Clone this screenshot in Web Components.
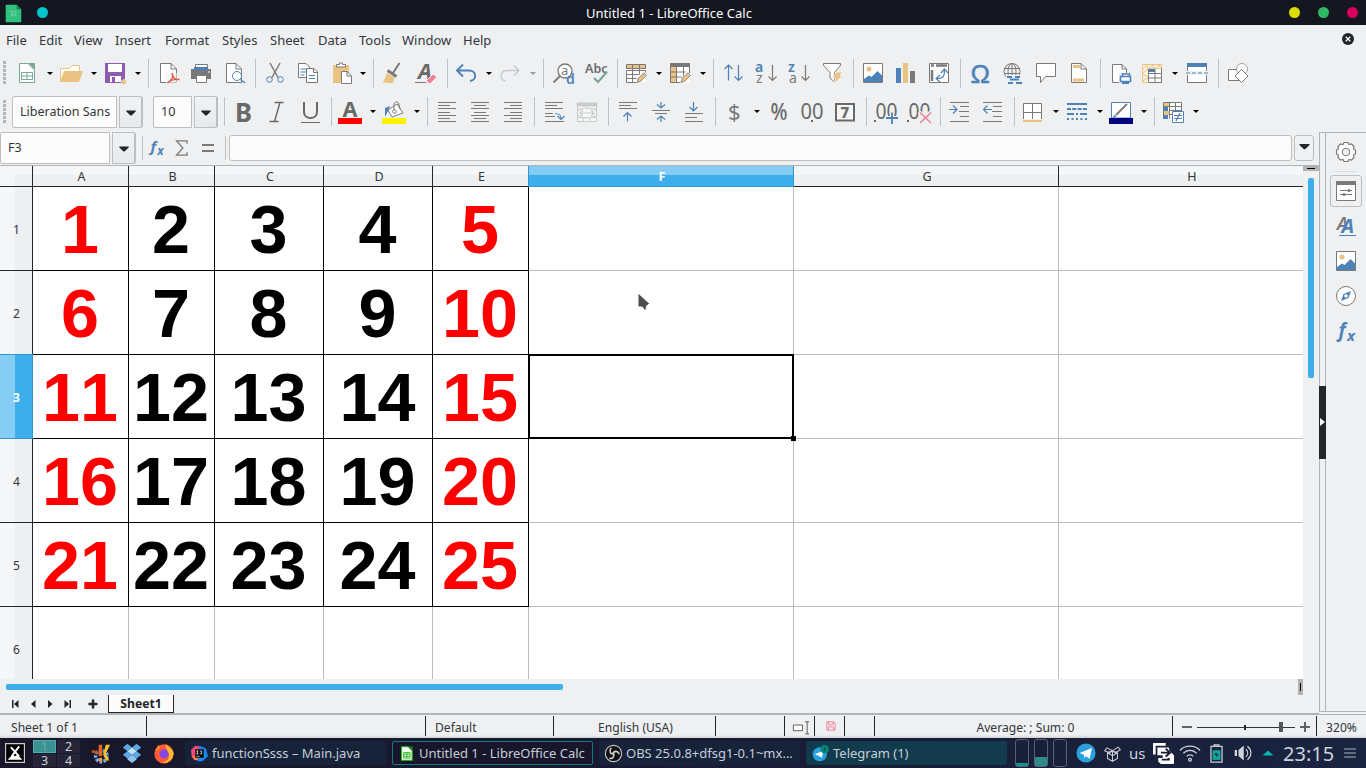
<!DOCTYPE html>
<html lang="en">
<head>
<meta charset="utf-8">
<title>Untitled 1 - LibreOffice Calc</title>
<style>
html,body{margin:0;height:100%;overflow:hidden}
body{font:13px "Noto Sans",sans-serif;color:#31363b}
</style>
</head>
<body>
<calc-desktop></calc-desktop>
<script>
const G='#797979',B='#4d82b8',O='#eac282',P='#ed8198';
const page=`<path d="M5 2.5H15.5L20.5 7.5V21.5H5Z" fill="#fff" stroke="${G}"/><path d="M15 2.5V8H20.5" fill="none" stroke="${G}"/>`;
const pencil=`<path d="M12 22l1.5-5 6-6.5 3.5 3.2-6 6.5z" fill="#eff0f1"/><path d="M13 21.5l1.2-4 5.6-5.7 2.6 2.6-5.6 5.8z" fill="${O}" stroke="${G}" stroke-width=".8"/>`;
const lines=(ys)=>ys.map(([x,y,w])=>`<path d="M${x} ${y}h${w}" stroke="${G}"/>`).join('');
const T=(x,y,s,t,c=G,e='')=>`<text x="${x}" y="${y}" font-size="${s}" fill="${c}" ${e}>${t}</text>`;
const picture=`<path d="M2.5 2.5h19v19h-19z" fill="#fff" stroke="${G}"/><circle cx="8" cy="8" r="2.5" fill="${O}"/><path d="M3 21v-3l5-3.5 2.500 1.500 6-6 4.500 4.500V21z" fill="${B}"/>`;
const ICONS={
new:`<path d="M4.500 2.500H13L19.500 9V21.500H4.500Z" fill="#fff" stroke="#76a797"/><path d="M13 2h7v7z" fill="#76a797"/><path d="M6.500 11.500h11v7h-11zM6.500 15h11M12 11.500v7" fill="#fff" stroke="#76a797"/>`,
open:`<path d="M1.500 20.500V7.500H10.500L13 4.500H20.500V11" fill="#fff" stroke="${O}"/><path d="M1 21L5 10H24L20 21Z" fill="${O}"/>`,
save:`<path d="M2 2h20v20H2z" fill="#8e5bb3"/><path d="M5 3h14v8H5zM7 15h11v6H7z" fill="#fff"/><path d="M9 16h3v5H9z" fill="#8e5bb3"/><circle cx="21" cy="21" r="2.500" fill="${O}" stroke="#eff0f1" stroke-width=".6"/>`,
pdf:`<path d="M3.500 2.500H14L19.500 8V21.500H3.500Z" fill="#fff" stroke="${G}"/><path d="M14 2.500V8h5.500" fill="none" stroke="${G}"/><path d="M9 12h14v11H9z" fill="#eff0f1" opacity=".6"/><path d="M15 12c1.500 3 0 7-4.500 10M15.500 13c0 4 3 6 7 5.500M10.500 22c3-3 7-4 12-3.500" fill="none" stroke="#de5a44" stroke-width="1.400"/>`,
print:`<path d="M6.500 8V3.500h12V8" fill="#fff" stroke="${G}"/><path d="M2 8h20v10H2z" fill="${G}"/><path d="M5 6h14v3H5z" fill="${B}"/><path d="M7.500 14.500h10v7h-10z" fill="#fff" stroke="${G}"/><path d="M19 11h2" stroke="#fff"/>`,
preview:`<path d="M3.500 2.500H13L18.500 8V21.500H3.500Z" fill="#fff" stroke="${G}"/><path d="M13 2.500V8h5.500" fill="none" stroke="${G}"/><circle cx="14" cy="15" r="4.500" fill="#fff" stroke="${B}"/><path d="M17.500 18.500L22 22" stroke="${B}" stroke-width="1.500"/>`,
cut:`<path d="M7 2l8 14.500M17 2L9 16.500" stroke="${G}" stroke-width="1.500"/><circle cx="6.500" cy="18.500" r="2.800" fill="none" stroke="${B}"/><circle cx="17.500" cy="18.500" r="2.800" fill="none" stroke="${B}"/>`,
copy:`<path d="M2.500 2.500H10L13.500 6V16.500H2.500Z" fill="#fff" stroke="${G}"/><path d="M4.500 8h7M4.500 11h7M4.500 14h4" stroke="${B}"/><path d="M10.500 7.500H18L21.500 11V21.500H10.500Z" fill="#fff" stroke="${G}"/><path d="M17.500 7.500v4h4" fill="none" stroke="${G}"/><path d="M13 14.500h6M13 17.500h6" stroke="${B}"/>`,
paste:`<path d="M4 4h16v18H4z" fill="${O}"/><path d="M7.500 6V3.500h3V2h3v1.500h3V6z" fill="#fff" stroke="${G}"/><path d="M12.500 10.500H18L22.500 15V22.500H12.500Z" fill="#fff" stroke="${G}"/><path d="M18 10.500V15h4.500" fill="none" stroke="${G}"/>`,
brush:`<path d="M18.500 2L12 12" stroke="${G}" stroke-width="2"/><path d="M6.500 9.500l9 6" stroke="${G}" stroke-width="3"/><path d="M6 12l7.500 4.500L12 22H6L5 20.500 4 22H2z" fill="${O}"/>`,
clear:T(4,18,22,'A','#696969','font-style="italic" font-weight="700"')+`<path d="M1 21.500h11" stroke="${G}"/><path d="M12 20l7-7 4 3-7 7z" fill="${P}" stroke="#eff0f1"/>`,
undo:`<path d="M9 3.500L3 9.500l6 6M3 9.500h12c8 0 8 10 1 10.500" fill="none" stroke="${B}" stroke-width="1.900"/>`,
redo:`<path d="M16 4.500l5 5-5 5M21 9.500H9C2 9.500 1 19 7.500 20" fill="none" stroke="#c5c7c9" stroke-width="1.300"/>`,
find:`<circle cx="14" cy="10" r="7" fill="#fff" stroke="${G}" stroke-width="1.300"/><path d="M9 15L2.500 21.500" stroke="${G}" stroke-width="1.800"/>${T(10,14,13,'a')}${T(15,23,14,'d',B,'font-weight="600"')}`,
abc:T(1,12,12.500,'Abc','#696969','font-weight="600"')+`<path d="M10 17l4 4 9-10" fill="none" stroke="#76a797" stroke-width="2.200"/>`,
rows:`<path d="M2 8h20v13H2z" fill="#fff"/><path d="M2.500 3.500h19v4h-19z" fill="${O}"/><path d="M2.500 3.500h19v4h-19zM2.500 9.500v12h11M2.500 9.500h19v2M2.500 13.500h13M2.500 17.500h10M8.500 3v18.500M15.500 3v10" fill="none" stroke="${G}"/>${pencil}`,
cols:`<path d="M2 2h20v20H2z" fill="#fff"/><path d="M2 2h20v4H2z" fill="${G}"/><path d="M2.500 6h6v15.500h-6z" fill="${O}"/><path d="M2.500 6v15.500h10M8.500 6v15.500M15.500 6v10M21.500 6v6M2.500 11h15M2.500 16h12" fill="none" stroke="${G}"/>${pencil}`,
sort:`<path d="M7.500 19.500V4M3.500 8l4-4 4 4M17.500 4v15.500M13.500 15.500l4 4 4-4" fill="none" stroke="${B}" stroke-width="1.200"/>`,
az:T(1,11,14,'a',B,'font-weight="600"')+T(2,22,14,'z')+`<path d="M18.500 4v15.500M14.500 15.500l4 4 4-4" fill="none" stroke="${G}" stroke-width="1.200"/>`,
za:T(1,11,14,'z',B,'font-weight="600"')+T(2,22,14,'a')+`<path d="M18.500 4v15.500M14.500 15.500l4 4 4-4" fill="none" stroke="${G}" stroke-width="1.200"/>`,
filter:`<path d="M3.500 2.500h17l0 2-6 7V21l-4.500-4v-5.500l-6.500-7z" fill="#fff" stroke="${G}"/><path d="M17 11h5l-2 4h2.500L13 23l2.500-6H12z" fill="${O}" stroke="#eff0f1" stroke-width=".7"/>`,
image:picture,
chart:`<path d="M3 7h5v15H3z" fill="${B}"/><path d="M10 2h5v20h-5z" fill="${O}"/><path d="M17 10h5v12h-5z" fill="${G}"/>`,
pivot:`<path d="M2.500 2.500h19v19h-19z" fill="#fff" stroke="${G}"/><path d="M4 4.500h3M9 4.500h11M5 9v11" stroke="${G}" stroke-width="2.500"/><path d="M10 17.500c7 0 7.500-3 7.500-8M14 12l3.500-4 3.500 4M13 14l-4 3.500 4 3.500" fill="none" stroke="${B}" stroke-width="1.200"/>`,
omega:T(2.500,21.500,26,'Ω',B,'font-family="Liberation Sans" stroke="#4d82b8" stroke-width=".5"'),
link:`<g fill="none" stroke="${G}"><circle cx="11" cy="10.500" r="8"/><ellipse cx="11" cy="10.500" rx="4" ry="8"/><path d="M3 7.500h16M3 12.500h16M11 2.500v16"/></g><path d="M5 14h19v9H5z" fill="#eff0f1"/><g stroke="${B}" stroke-width="1.800"><path d="M6 16h5M14 16h5M9 18.500h9M7 22h5M15 22h6"/></g>`,
comment:`<path d="M2.500 2.500h19v13h-10l-5 6v-6h-4z" fill="#fff" stroke="${G}"/>`,
header:`<path d="M4.500 2.500H14L19.500 8V21.500H4.500Z" fill="#fff" stroke="${G}"/><path d="M14 2.500V8h5.500" fill="none" stroke="${G}"/><path d="M6 4h7v3H6zM6 17.500h11v3H6z" fill="${O}"/>`,
prange:`<path d="M3.500 3.500H13L17.500 8V21.500H3.500Z" fill="#fff" stroke="${G}"/><path d="M13 3.500V8h4.500" fill="none" stroke="${G}"/><path d="M10 12h13v10H10z" fill="#eff0f1"/><path d="M13.500 15v-2h7v2M11.500 15.500h10v5h-10z" fill="#fff" stroke="${B}" stroke-width="1.600"/><path d="M13 21h7v2h-7z" fill="${B}"/>`,
freeze:`<path d="M2 3h20v18H2z" fill="#fff"/><path d="M2.500 3.500h19v4h-13v14h-6z" fill="#fbf3e2" stroke="${O}"/><path d="M3 8l4-4 1 4 5-4 1 4 5-4 2 4M3 12l5-4M3 13l5 3M3 20l5-3" fill="none" stroke="${O}"/><path d="M8.500 8v13.500M15 8v13.500M21.500 7.500v14M9 12.500h13M9 17h13M9 21.500h13" stroke="${G}"/><path d="M9 8h6v3H9z" fill="${B}"/>`,
split:`<path d="M2.500 2.500h19v19h-19z" fill="#fff" stroke="${G}"/><path d="M2 2h20v4H2z" fill="${B}"/><path d="M0 10h24v4H0z" fill="#eff0f1"/><path d="M1 12h22" stroke="${B}" stroke-dasharray="4 2"/>`,
shapes:`<path d="M2.500 8.500h11v11h-11z" fill="#fff" stroke="${G}"/><circle cx="16" cy="8" r="5.500" fill="#fff" stroke="#a0a0a0"/><path d="M15.500 8.500l6.500 6.500-6.500 6.500L9 15z" fill="#fff" stroke="${G}"/>`,
bold:T(4,22,27,'B','#696969','font-weight="700" textLength="17" lengthAdjust="spacingAndGlyphs"'),
italic:`<path d="M9 2.500h9M4 21.500h9M14.500 2.500l-5.500 19" transform="translate(.5)" fill="none" stroke="#696969" stroke-width="1.400"/>`,
underline:`<path d="M6 2v10c0 8 13 8 13 0V2" fill="none" stroke="#696969" stroke-width="2"/><path d="M3 22.500h19" stroke="#696969"/>`,
fontcolor:T(4.500,17,21,'A','#696969','font-weight="700" textLength="15" lengthAdjust="spacingAndGlyphs"')+`<path d="M0 18h24v6H0z" fill="#f00"/>`,
fill:`<path d="M3 17V8l5-2-2 5z" fill="${B}"/><path d="M6 10l9-6 6 9-11 4z" fill="#fff" stroke="${G}"/><path d="M12 10V5c0-4 5-4 5 0l1 4" fill="none" stroke="${G}"/><circle cx="12.500" cy="11.500" r="1.800" fill="none" stroke="${G}"/><path d="M0 18h24v6H0z" fill="#fff200"/>`,
left:lines([[3,2.500,18],[3,5.500,12],[3,8.500,18],[3,12.500,12],[3,15.500,18],[3,18.500,12],[3,21.500,18]]),
center:lines([[3,2.500,18],[6,5.500,12],[3,8.500,18],[6,12.500,12],[3,15.500,18],[6,18.500,12],[3,21.500,18]]),
right:lines([[3,2.500,18],[9,5.500,12],[3,8.500,18],[9,12.500,12],[3,15.500,18],[9,18.500,12],[3,21.500,18]]),
wrap:lines([[3,2.500,18],[3,5.500,12],[3,8.500,18],[3,13.500,8],[3,16.500,10],[3,21.500,19]])+`<path d="M13 13.500c5 0 6 2 6 5.500M15.500 16l3.500 3.500 3.500-3.500" fill="none" stroke="${B}" stroke-width="1.200"/>`,
merge:`<g fill="#f6f7f7" stroke="#c9cbcc"><path d="M2.500 5h19v16.500h-19zM8 17v4.500M15 17v4.500"/><path d="M2 3h20v3H2z" fill="#c9cbcc"/><path d="M2.500 9h19M3 17.500h18"/><ellipse cx="12" cy="13" rx="10" ry="5"/><path d="M5 13h14M8 10l-3 3 3 3M16 10l3 3-3 3" fill="none" stroke-width="1.200"/></g>`,
top:lines([[3,2.500,18],[3,5.500,12],[3,8.500,18]])+`<path d="M11.500 21.500v-9M7.500 16.500l4-4 4 4" fill="none" stroke="${B}" stroke-width="1.200"/>`,
middle:lines([[3,10.500,18],[6,13.500,12]])+`<path d="M12 2v6M8 4.500L12 8l4-3.500M12 22v-6M8 19.500l4-3.500 4 3.500" fill="none" stroke="${B}" stroke-width="1.200"/>`,
bottom:lines([[3,13.500,18],[3,17.500,12],[3,21.500,18]])+`<path d="M11.500 2v9M7.500 7l4 4 4-4" fill="none" stroke="${B}" stroke-width="1.200"/>`,
currency:T(6,20,22,'$'),
percent:T(3.500,20,23,'%','#696969','font-weight="500" textLength="17" lengthAdjust="spacingAndGlyphs"'),
decimal:T(.5,19,22,'00','#696969','textLength="23" lengthAdjust="spacingAndGlyphs"')+`<path d="M11 20h2v2h-2z" fill="#696969"/>`,
date:`<path d="M3 4h18v16.500H3z" fill="#f6f6f6" stroke="#696969" stroke-width="2"/>`+T(7.500,18,15,'7','#696969','font-weight="800"'),
adddec:T(1.500,18.500,21,'00','#696969','textLength="22" lengthAdjust="spacingAndGlyphs"')+`<path d="M0 20h2v2H0z" fill="#696969"/><path d="M11 18h13M18 13v11" stroke="#eff0f1" stroke-width="4"/><path d="M12 18h12M18 12.500v11.500" stroke="${B}" stroke-width="1.800"/>`,
deldec:T(1.500,18.500,21,'00','#696969','textLength="22" lengthAdjust="spacingAndGlyphs"')+`<path d="M0 20h2v2H0z" fill="#696969"/><path d="M12 12l12 12M24 12L12 24" stroke="#eff0f1" stroke-width="4"/><path d="M13 12.500l11 10.500M24 12.500L13 23" stroke="${P}" stroke-width="1.600"/>`,
indent:lines([[3,2.500,19],[13,6.500,9],[12,11.500,10],[13,16.500,9],[3,21.500,19]])+`<path d="M2 9.500h8M6 5.500l4 4-4 4" fill="none" stroke="${B}" stroke-width="1.200"/>`,
outdent:lines([[3,2.500,19],[13,6.500,9],[12,11.500,10],[13,16.500,9],[3,21.500,19]])+`<path d="M3.500 9.500h8.500M7.500 5.500l-4 4 4 4" fill="none" stroke="${B}" stroke-width="1.200"/>`,
border:`<path d="M2.500 19V3.500h18V19M2.500 12.500h18M11.500 3.500V19" fill="#fff" stroke="${G}"/><path d="M2 20h19v2H2z" fill="${O}"/>`,
linestyle:`<g stroke="${B}" stroke-width="2"><path d="M2 4h20"/><path d="M2 9h20" stroke-dasharray="4 1.300"/><path d="M2 14h20" stroke-dasharray="7 2 2 2"/><path d="M2 19h20" stroke-dasharray="2 2.500"/></g>`,
linecolor:`<path d="M2.500 2.500h19V18h-19z" fill="#fff" stroke="${B}"/><path d="M18 4L7 15" stroke="${G}" stroke-width="1.800"/><path d="M4 18l1-3 3 1z" fill="${B}"/><path d="M0 18h24v6H0z" fill="#000080"/>`,
cond:`<path d="M3 2.500h18v16H3z" fill="#fff"/><path d="M2 3h6v4H2zM2 11h6v4H2z" fill="${O}"/><path d="M2 7h5v4H2zM2 15h5v4H2z" fill="${B}"/><path d="M2.500 18.500v-16h18v10M8.500 2.500v16M14.500 2.500v10M2.500 6.500h18M8 10.500h12M8 14.500h4" fill="none" stroke="${G}"/><path d="M11.500 11.500h11v11h-11z" fill="#fff" stroke="${B}"/><path d="M13 15.500h8M13 18.500h8M19 13l-4 8" stroke="${B}" stroke-width="1.200"/>`,
fx:T(4.500,18,19,'f',B,'font-style="italic" font-weight="700"')+T(13,22,15,'x',B,'font-style="italic" font-weight="700"'),
sum:`<path d="M18 7V3.500H5.500L13 12l-7.500 8.500H18V17" fill="none" stroke="${G}" stroke-width="1.600"/>`,
equals:`<path d="M6 9h12M6 15h12" stroke="${G}" stroke-width="2"/>`,
gear:`<path d="M10 2.500h4l1 2 2.500-.5 2.500 2.500-.5 2.500 2 1v4l-2 1 .5 2.500-2.500 2.500-2.500-.500-1 2h-4l-1-2-2.500.500L4 17.500l.500-2.500-2-1v-4l2-1L4 6.500 6.500 4l2.500.500z" fill="#fff" stroke="${G}" stroke-width="1.200"/><circle cx="12" cy="12" r="3.800" fill="#eff0f1" stroke="${G}"/>`,
props:`<path d="M2.500 2.500h19v19h-19z" fill="#fff" stroke="${G}"/><path d="M2 2h20v4H2z" fill="${G}"/><path d="M6 11.500h12M6 15.500h12" stroke="${G}"/><circle cx="15" cy="11.500" r="1.500" fill="${G}"/><circle cx="10" cy="15.500" r="1.500" fill="${G}"/>`,
styles:T(3,16,18,'A',G,'font-style="italic" font-weight="600"')+T(7.500,19,20,'A',B,'font-style="italic" font-weight="700"')+`<path d="M5 21.500h17" stroke="${B}"/>`,
navigator:`<circle cx="12" cy="12" r="9.500" fill="#fff" stroke="${G}"/><path d="M17 7l-2.500 7L7 17l2.500-7z" fill="${B}"/><circle cx="12" cy="12" r="1.800" fill="#fff"/>`,
calcdark:`<path d="M4 3h12l5 5v14H4z" fill="#2fc27d"/><path d="M16 3v5h5z" fill="#127a4c"/><path d="M9 9h7v7H9zM12.500 9v7M9 12h7" fill="#5cd39a" stroke="#45bb83"/>`,
calc:`<path d="M5 2.500h10l5 5v14H5z" fill="#fff" stroke="#24b51d" stroke-width="1.600"/><path d="M14 2h7v7z" fill="#187c15"/><path d="M8 10.500h9v8H8zM8 13h9M8 16h9M12.500 10.500v8" fill="none" stroke="#24b51d" stroke-width="1.300"/>`,
xorg:`<path d="M.7.700h22.600v22.600H.700z" fill="#000" stroke="#c9c9c9" stroke-width="1.400"/><path d="M7 5l10 11M17 4L8 16" stroke="#fff" stroke-width="2.200"/><path d="M3 20l6-6 3 2 3-2 6 6z" fill="#fff"/>`,
kde:`<circle cx="13" cy="15" r="6.500" fill="none" stroke="#7ea3d6" stroke-width="4" stroke-dasharray="3 1.500"/><path d="M10 2h4v13h-4z" fill="#e8651a"/><path d="M10 17h4v4h-4z" fill="#e8a05a"/><path d="M15 13l3-11h5l-5 10 4 8h-4z" fill="#f0c429"/><path d="M2 8l7 1v3l-7-1z" fill="#c2521b"/>`,
dropbox:`<path d="M7 2l5 4-5 4-5-4zM17 2l5 4-5 4-5-4zM7 10l5 4-5 4-5-4zM17 10l5 4-5 4-5-4z" fill="#5aa9e6"/><path d="M12 6l5 4-5 4-5-4z" fill="#c4e2f6"/><path d="M7 18l5-4 5 4v1l-5 4-5-4z" fill="#8cc4ee"/>`,
firefox:`<circle cx="12" cy="13" r="10.500" fill="#ff5a36"/><path d="M14 1c0 4 7 5 8.500 11-1 8-7 12-13 10.500 7-1 8-5 8-9-1-4-4-6-3.500-12.500z" fill="#ffbd2e"/><path d="M2 10l4-7 2 4z" fill="#ff8a2a"/><circle cx="12" cy="13" r="5" fill="#8a46e0"/>`,
idea:`<path d="M0 7l6-6 7 1-1 20-7-1-4-5z" fill="#f6487e"/><path d="M12 1l9 4 3 11-8 7H9z" fill="#1689f5"/><path d="M1 16h8v5H5z" fill="#fb8b3c"/><path d="M6 6h12v12H6z" fill="#0b0b0b"/><path d="M7.500 8.500h3M9 8.500v4M7.500 12.500h3M12.500 8.500h2.500v4h-2.500M8 16h4" fill="none" stroke="#fff"/>`,
obs:`<circle cx="12" cy="12" r="11.500" fill="#111" stroke="#c6c6c6" stroke-width="1.500"/><path d="M12 13C6 12 6 7 9 4M11 12c3-5 8-3 9 1M12 11c2 5-1 9-6 8" fill="none" stroke="#d2d2d2" stroke-width="2.200"/>`,
telegram:`<circle cx="12" cy="12" r="11.500" fill="#2aa1de"/><path d="M4.500 12L19 6l-2.500 13-4.500-3-2 2-.5-4z" fill="#fff"/>`,
telebadge:`<circle cx="11" cy="13" r="10" fill="#2aa1de"/><path d="M4 13l12-5-2 10-4-2.500z" fill="#fff"/><circle cx="18" cy="6" r="6" fill="#00857c"/><path d="M18 3v6" stroke="#0b3f48" stroke-width="1.500"/>`,
box:`<path d="M12 8l7 3v8l-7 4-7-4v-8zM12 8v15M12 8l-8-4-3 4 7 3zM12 8l8-5 3 4-7 4zM5 11l7 4 7-4" fill="none" stroke="#c9c9d3" stroke-width="1.500"/>`,
layers:`<path d="M1.500 13V1.500h13" fill="none" stroke="#fff" stroke-width="3"/><path d="M5 5h13l1 4 5 5v9l-1 1H9l-3-3v-4h5v-3H5z" fill="#fff"/><path d="M9 11h9M14.500 6.500l5 4.500-5 4.500M10 19h8v-2" stroke="#1a1a33" stroke-width="2.200" fill="none"/>`,
wifi:`<g fill="none" stroke="#d0d3da" stroke-width="1.500"><path d="M0 9c6-7 18-7 24 0M4 12.500c4-5 12-5 16 0M8 16c2-2.500 6-2.500 8 0"/><circle cx="12" cy="20" r="1.700"/></g>`,
battery:`<path d="M5 3h14v20H5zM9 3V1h6v2" fill="none" stroke="#c9cdd4" stroke-width="1.600"/><path d="M7 8h10v12H7z" fill="#12a79b"/><path d="M9 14l3-4v3h3l-3 4v-3z" fill="#1b2340"/>`,
volume:`<path d="M1 8h3v8H1zM6 8l7-6v20l-7-6z" fill="#d0d3da"/><path d="M16 7c3 3 3 7 0 10M18 3c6 5 6 13 0 18" fill="none" stroke="#d0d3da" stroke-width="1.500"/>`,
hamburger:`<path d="M2 5h20M2 12h20M2 19h20" stroke="#7b8794" stroke-width="2.600"/>`,
caret:`<path d="M4 9.500h16v1.500l-7 7h-2l-7-7z" fill="currentColor"/>`,
first:`<path d="M6 4h3v16H6zM19 4v16l-9-8z" fill="#232629"/>`,
prev:`<path d="M17 4v16l-9-8z" fill="#232629"/>`,
next:`<path d="M8 4v16l9-8z" fill="#232629"/>`,
last:`<path d="M15 4h3v16h-3zM5 4v16l9-8z" fill="#232629"/>`,
plus:`<path d="M9.500 3h5v6.500H21v5h-6.500V21h-5v-6.500H3v-5h6.500z" fill="#232629"/>`,
insmode:`<path d="M.500 8.500h13v8h-13z" fill="#fff" stroke="#555" stroke-width="1.300"/><path d="M17 4h6M17 21h6M20 4v17" stroke="#555" stroke-width="1.300"/>`,
savered:`<path d="M2 2h17l3 3v17H2zM6 2v7h11V2M6 22v-8h12v8" fill="none" stroke="${P}" stroke-width="2.200"/>`,
closex:`<circle cx="12" cy="12" r="12" fill="#232629"/><path d="M7.500 7.500l9 9M16.500 7.500l-9 9" stroke="#fff" stroke-width="2.400"/>`,
pointer:`<path d="M6 1v17h5l3 4 2-1v-4l4-3z" fill="#4d4d4d" stroke="#fff" stroke-width="1.200"/>`,
triup:`<path d="M1 17L12 7l11 10z" fill="#00b5ad"/>`
};
const define=(tag,css,html,setup)=>{
  const t=document.createElement('template');
  customElements.define(tag,class extends HTMLElement{
    connectedCallback(){
      if(this.shadowRoot)return;
      const r=this.attachShadow({mode:'open'});
      t.innerHTML=`<style>*{box-sizing:border-box}:host{box-sizing:border-box;display:block}${css}</style>${typeof html==='function'?html(this):html}`;
      r.append(t.content.cloneNode(true));
      if(setup)setup(this,r);
    }
  });
};
/* Row of centred children: each entry is [name, centre, width]; the free space before it becomes its margin. */
const flow=(items,make)=>{let end=0;return items.map(([n,c,w])=>{const m=c-w/2-end;end=c+w/2;return make(n,w,m);}).join('');};

define('calc-icon','svg{display:block;width:100%;height:100%;overflow:visible;font-family:"Noto Sans",sans-serif}:host{width:24px;height:24px;flex:none}',
  h=>`<svg viewBox="0 0 24 24">${ICONS[h.getAttribute('name')]}</svg>`);

define('title-bar',':host{height:25px;background:#141620;color:#fcfcfc;display:grid;grid-template-columns:1fr auto 1fr;align-items:center}.l,.r{display:flex;align-items:center}.l{gap:13px;padding-left:2px}.r{justify-content:flex-end;gap:18px;padding-right:8px}i{width:11px;height:11px;border-radius:50%}calc-icon{width:22px;height:22px}span{margin:0 14px 0 -14px}',
`<div class="l"><calc-icon name="calcdark"></calc-icon><i style="background:#00c5cd"></i></div><span><slot></slot></span><div class="r"><i style="background:#dcdc00"></i><i style="background:#2db866"></i><i style="background:#d8005a"></i></div>`);

define('menu-bar',':host{height:30px;display:flex;align-items:center;padding:0 12px 0 6px}span{flex:none}calc-icon{width:12px;height:12px;margin-left:auto;margin-bottom:2px}',
()=>[['File',33],['Edit',35],['View',41],['Insert',50],['Format',57],['Styles',48],['Sheet',48],['Data',41],['Tools',43],['Window',61],['Help',40]].map(([t,w])=>`<span style="width:${w}px">${t}</span>`).join('')+'<calc-icon name="closex"></calc-icon>');

define('combo-box',':host{display:flex;height:32px;gap:2px;font-size:12.500px}div{background:#fcfcfc;border:1px solid #bcbebf;border-radius:2px 0 0 2px;padding-left:7px;display:flex;align-items:center;flex:1;white-space:nowrap;overflow:hidden}b{width:24px;border:1px solid #bcbebf;border-right-width:2px;border-radius:0 3px 3px 0;background:linear-gradient(#f1f2f3,#e8e9ea);display:flex;align-items:center;justify-content:center;color:#232629}calc-icon{width:14px;height:14px}',
'<div><slot></slot></div><b><calc-icon name="caret"></calc-icon></b>');

define('tool-bar',':host{height:39px;display:flex;align-items:center}.sep{height:29px;background:#bfc1c2;flex:none}.grip{width:3px;height:24px;flex:none;background:repeating-linear-gradient(#b4b6b7 0 3px,transparent 3px 4px);margin:0 -6px 0 3px}.arr{height:24px;flex:none;display:flex;align-items:center;padding-left:1px}.arr:after{content:"";border:3px solid transparent;border-top-color:#000;border-bottom:0;margin:auto}.dim{opacity:.35}combo-box,calc-icon{flex:none}',
h=>{
  const fmt=h.getAttribute('kind')==='format';
  const spec=fmt
  ?'bold,243 italic,277 underline,310 |,331 fontcolor,350 v,372 fill,394 v,416 |,427.500 left,447 center,480 right,513 |,534.500 wrap,554 merge,587 |,608.500 top,628 middle,661 bottom,694 |,715.500 currency,734 v,756 percent,779 decimal,812 date,845 |,866.500 adddec,886 deldec,919 |,940.500 indent,959 outdent,992 |,1014.500 border,1033 v,1055 linestyle,1077 v,1099 linecolor,1121 v,1143 |,1154.500 cond,1173 v,1195'
  :'new,27 v,49 open,71 v,93 save,115 v,137 |,148.500 pdf,169 print,201 preview,235 |,255.500 cut,275 copy,308 paste,341 v,362 |,373.500 brush,393 clear,426 |,447.500 undo,466 v,488 redo,510 d,532 |,543.500 find,563 abc,596 |,617.500 rows,636 v,658 cols,680 v,702 |,713.500 sort,733 az,766 za,799 filter,832 |,853.500 image,873 chart,905 pivot,939 |,960.500 omega,980 link,1013 comment,1046 header,1079 |,1100.500 prange,1121 freeze,1152 v,1174 split,1197 |,1218.500 shapes,1238';
  const items=spec.split(' ').map(s=>{const[n,c]=s.split(',');return[n,+c,n==='|'?1:n==='v'||n==='d'?7:24];});
  const first=fmt?[['font',77.500,131],['size',185.500,65],['|',224.500,1]]:[];
  return '<span class="grip"></span>'+flow([...first,...items],(n,w,m)=>{
    const s=`style="width:${w}px;margin-left:${m}px"`;
    if(n==='font')return `<combo-box ${s}>Liberation Sans</combo-box>`;
    if(n==='size')return `<combo-box ${s}>10</combo-box>`;
    if(n==='|')return `<span class="sep" ${s}></span>`;
    if(n==='v')return `<span class="arr" ${s}></span>`;
    if(n==='d')return `<span class="arr dim" ${s}></span>`;
    return `<calc-icon name="${n}" ${s}></calc-icon>`;
  });
});

define('formula-bar',':host{height:34px;display:flex;align-items:center;border-bottom:1px solid #b1b3b4;padding-bottom:2px}combo-box{width:136px}.sep{width:1px;height:24px;background:#bfc1c2;margin-left:6px}calc-icon.fx{width:19px;height:19px;margin-left:4px}calc-icon.s{width:20px;height:20px;margin-left:6px}calc-icon.e{margin-left:4px}.in{flex:1;height:26px;margin:0 2px 0 3px;border:1px solid #bcbebf;border-radius:3px;background:#fcfcfc}.dd{width:20px;height:26px;margin-right:5px;border:1px solid #bcbebf;border-radius:3px;display:flex;align-items:center;justify-content:center}.dd calc-icon{width:15px;height:15px;margin-bottom:4px;color:#232629}',
`<combo-box>F3</combo-box><span class="sep"></span><calc-icon class="fx" name="fx"></calc-icon><calc-icon class="s" name="sum"></calc-icon><calc-icon class="e" name="equals"></calc-icon><span class="sep" style="margin-left:5px"></span><div class="in"></div><div class="dd"><calc-icon name="caret"></calc-icon></div>`);

define('sheet-grid',`:host{height:513px;display:grid;grid-template-columns:33px 96px 86px 109px 109px 96px 265px 265px 244px;grid-template-rows:21px repeat(5,84px) 72px;background:#fff;overflow:hidden}
div{border-right:1px solid #bdbdbd;border-bottom:1px solid #bdbdbd;min-width:0;display:flex;align-items:center;justify-content:center;position:relative}
.h{border-color:#232629;font-size:12.5px;padding-left:2px;background:linear-gradient(#f4f6f8 0 9px,#eeeff1 9px)}
.h.end{padding-left:22px}
.r{border-color:#232629;font-size:12px;padding:2px 0 0 1px;background:linear-gradient(90deg,#f4f6f8 0 15px,#eeeff1 15px)}
.r.low{padding-top:12px}
.corner{border-color:#232629;background:linear-gradient(#f4f6f8,#f4f6f8) 0 0/100% 9px no-repeat,linear-gradient(90deg,#f4f6f8 0 15px,#eeeff1 15px)}
.h.on{background:linear-gradient(#86cdf5 0 9px,#3daeeb 9px);border-color:#3196d0;color:#fff;font-weight:700;box-shadow:-1px 0 #3196d0}
.r.on{background:linear-gradient(90deg,#86cdf5 0 15px,#3daeeb 15px);border-color:#3196d0;color:#fff;font-weight:700;box-shadow:0 -1px #3196d0}
.n{border-color:#000;font:700 68.3px/84px "Liberation Sans",sans-serif;font-kerning:none;color:#000;padding-right:1px}
.red{color:red}.end{border-right:0}.low{border-bottom:0}
.sel:before{content:"";position:absolute;inset:-1px -1px -1px -1px;border:2px solid #000}
.sel{z-index:1}.sel:after{content:"";position:absolute;width:5px;height:5px;right:-3px;bottom:-3px;background:#000}
calc-icon{position:absolute;left:104px;top:20px;width:20px;height:22px}`,
()=>{
  let s='<div class="corner"></div>'+'ABCDEFGH'.split('').map(c=>`<div class="h ${c==='F'?'on':''} ${c==='H'?'end':''}">${c}</div>`).join('');
  for(let r=0;r<6;r++){
    s+=`<div class="r ${r===2?'on':''} ${r===5?'low':''}">${r+1}</div>`;
    for(let c=0;c<8;c++){
      if(r<5&&c<5)s+=`<div class="n ${c===0||c===4?'red':''}">${r*5+c+1}</div>`;
      else s+=`<div class="${r===5?'low ':''}${c===7?'end ':''}${r===2&&c===5?'sel':''}">${r===1&&c===5?'<calc-icon name="pointer"></calc-icon>':''}</div>`;
    }
  }
  return s;
});

define('grid-pane',':host{display:grid;grid-template-columns:1303px 16px;grid-template-rows:513px 16px}.cap{height:5px;background:#b1b3b4;padding-top:2px}.cap:before{content:"";display:block;width:8px;height:1px;background:#000;margin-left:4px}.bar{width:6px;height:200px;margin:7px 0 0 5px;border-radius:2px;background:#3daeeb}.hs{display:flex;align-items:center}.hb{width:557px;height:6px;margin-left:6px;background:#3daeeb;border-radius:2px}.end{margin-left:auto;width:5px;height:16px;background:#b1b3b4;display:flex;align-items:center;justify-content:center}.end:before{content:"";width:1px;height:8px;background:#000}',
'<sheet-grid></sheet-grid><div class="v"><div class="cap"></div><div class="bar"></div></div><div class="hs"><div class="hb"></div><div class="end"></div></div>');

define('sheet-tabs',':host{height:19px;display:flex;border-bottom:1px solid #b1b3b4;padding-left:9px}calc-icon{width:12px;height:12px;margin-top:3px}.n{display:flex;gap:5.700px}.p{margin-left:13px}.tab{margin-left:9px;width:66px;height:18px;background:#fcfcfc;border:solid #232629;border-width:0 1px 1px;font:700 12.200px/17px "Noto Sans";text-align:center;color:#232629}',
'<div class="n"><calc-icon name="first"></calc-icon><calc-icon name="prev"></calc-icon><calc-icon name="next"></calc-icon><calc-icon name="last"></calc-icon></div><calc-icon class="p" name="plus"></calc-icon><div class="tab"><slot></slot></div>');

define('side-bar',':host{width:47px;height:580px;border:solid #b1b3b4;border-width:1px 0 1px 1px;display:flex}.split{width:6px;border-right:1px solid #b1b3b4;display:flex;align-items:center}.knob{width:7px;height:73px;flex:none;margin:0 -1px;background:#232629;display:flex;align-items:center}.knob:before{content:"";margin-left:1px;border:4px solid transparent;border-left:5px solid #fff;border-right:0}.col{flex:1;display:flex;flex-direction:column;align-items:center;padding-top:7px}.b{width:32px;height:32px;display:flex;align-items:center;justify-content:center;margin-bottom:3px;flex:none}.on{border:1px solid #bcbebf;border-radius:3px}.rule{width:22px;height:1px;background:#dcdddf}.first{height:24px;margin-bottom:7px}.on{margin-top:3px}',
`<div class="split"><div class="knob"></div></div><div class="col"><div class="b first"><calc-icon name="gear"></calc-icon></div><div class="rule"></div><div class="b on"><calc-icon name="props"></calc-icon></div>${['styles','image','navigator','fx'].map(n=>`<div class="b"><calc-icon name="${n}"></calc-icon></div>`).join('')}</div>`);

define('status-bar',':host{height:25px;display:grid;grid-template-columns:147px 279px 128px 162px 69px 30px 30px 30px 298px 144px 49px;align-items:center;font-size:12.100px;background:linear-gradient(#eff0f1 0 20px,#c9cacc 24px)}div{height:20px;display:flex;align-items:center;justify-content:center;border-right:1px solid #232629;padding-top:2px;margin-bottom:1px}.z{border:0}.l{justify-content:flex-start;padding-left:9px}calc-icon{width:17px;height:17px}.sm{width:10px;height:10px}.track{width:98px;height:1px;background:#31363b;margin:0 5px;display:flex;align-items:center;padding-left:47px}.track:before{content:"";width:2px;height:5px;background:#232629}.track:after{content:"";width:4px;height:10px;background:#55585b;margin-left:33px}.m{width:10px;height:2px;background:#606468}.pl{width:10px;height:10px;background:linear-gradient(#606468,#606468) 0 4px/10px 2px no-repeat,linear-gradient(#606468,#606468) 4px 0/2px 10px no-repeat}',
`<div class="l" style="padding-left:11px">Sheet 1 of 1</div><div></div><div class="l">Default</div><div style="padding-left:2px">English (USA)</div><div></div><div style="padding-left:3px"><calc-icon name="insmode"></calc-icon></div><div style="padding:0 0 0 3px"><calc-icon class="sm" name="savered"></calc-icon></div><div></div><div style="padding-left:4px">Average: ; Sum: 0</div><div style="padding-left:3px"><span class="m"></span><span class="track"></span><span class="pl"></span></div><div class="z">320%</div>`);

define('task-button',':host{width:201px;height:24px;display:flex;align-items:center;padding-left:6px;gap:4px;background:#17233b;border-radius:2px;margin-right:6px;flex:none;white-space:nowrap;color:#c6cdd5}:host([active]){background:#17162b;border:1px solid #127a7c;padding-left:5px}:host([alert]){background:#123c4d}calc-icon{width:17px;height:17px}',
h=>`<calc-icon name="${h.getAttribute('icon')}"></calc-icon><span><slot></slot></span>`);

define('task-bar',`:host{height:30px;background:linear-gradient(90deg,#191729,#181a31 45%,#1a2440);display:flex;align-items:center;color:#ccd2da}
.pager{display:grid;grid-template-columns:23px 23px;grid-template-rows:13px 13px;gap:1px;margin:0 10px 0 7px}.pager span{background:#262538;font-size:12.500px;line-height:14px;text-align:center}.pager .on{background:#3b9292;border:1px solid #4cb0ae;color:#65a9ae;line-height:12px}
.m{width:14px;height:28px;border:1px solid #5b6074;border-radius:3px;margin-right:5px;display:flex;align-items:flex-end;flex:none}.m i{display:block;width:100%}
.clock{font-size:20px}.us{font-size:15px;line-height:20px}span{flex:none}`,
()=>{
  const tray=[['telegram',1086,20],['box',1112,17],['us',1138,18],['layers',1163.500,21],['wifi',1190,20],['battery',1216,19],['volume',1242.500,18],['triup',1268,12],['clock',1310,54],['hamburger',1350,14]];
  let end=1072;
  return `<calc-icon name="xorg" style="width:22px;height:20px;margin-left:4px"></calc-icon><div class="pager"><span class="on">1</span><span>2</span><span>3</span><span>4</span></div><calc-icon name="kde" style="width:21px;height:21px"></calc-icon><calc-icon name="dropbox" style="width:22px;height:22px;margin-left:10px"></calc-icon><calc-icon name="firefox" style="width:22px;height:22px;margin:0 10px"></calc-icon>
<task-button icon="idea">functionSsss – Main.java</task-button><task-button icon="calc" active>Untitled 1 - LibreOffice Calc</task-button><task-button icon="obs">OBS 25.0.8+dfsg1-0.1~mx...</task-button><task-button icon="telebadge" alert>Telegram (1)</task-button>
<span class="m" style="margin-left:2px"><i style="height:3px;background:#0e9390"></i></span><span class="m"><i style="height:9px;background:#2f8a89"></i></span><span class="m"></span>`+
  tray.map(([n,c,w])=>{const m=c-w/2-end;end=c+w/2;const s=`style="width:${w}px;margin-left:${m}px`;
    return n==='us'?`<span class="us" ${s}">us</span>`:n==='clock'?`<span class="clock" ${s}">23:15</span>`:`<calc-icon name="${n}" ${s};height:${w}px"></calc-icon>`;}).join('');
});

define('calc-desktop',':host{width:1366px;height:768px;background:#eff0f1;display:flex;flex-direction:column;overflow:hidden}.left{width:1319px}.body{display:grid;grid-template-columns:1319px 47px;height:583px}title-bar,menu-bar,tool-bar,status-bar,task-bar{flex:none}',
`<title-bar>Untitled 1 - LibreOffice Calc</title-bar><menu-bar></menu-bar><tool-bar kind="standard" style="height:36px"></tool-bar><tool-bar kind="format" style="height:41px"></tool-bar><div class="body"><div class="left"><formula-bar></formula-bar><grid-pane></grid-pane><sheet-tabs>Sheet1</sheet-tabs></div><side-bar></side-bar></div><status-bar style="height:24px;margin-top:-1px;border-top:1px solid #b1b3b4"></status-bar><task-bar></task-bar>`);
</script>
</body>
</html>
